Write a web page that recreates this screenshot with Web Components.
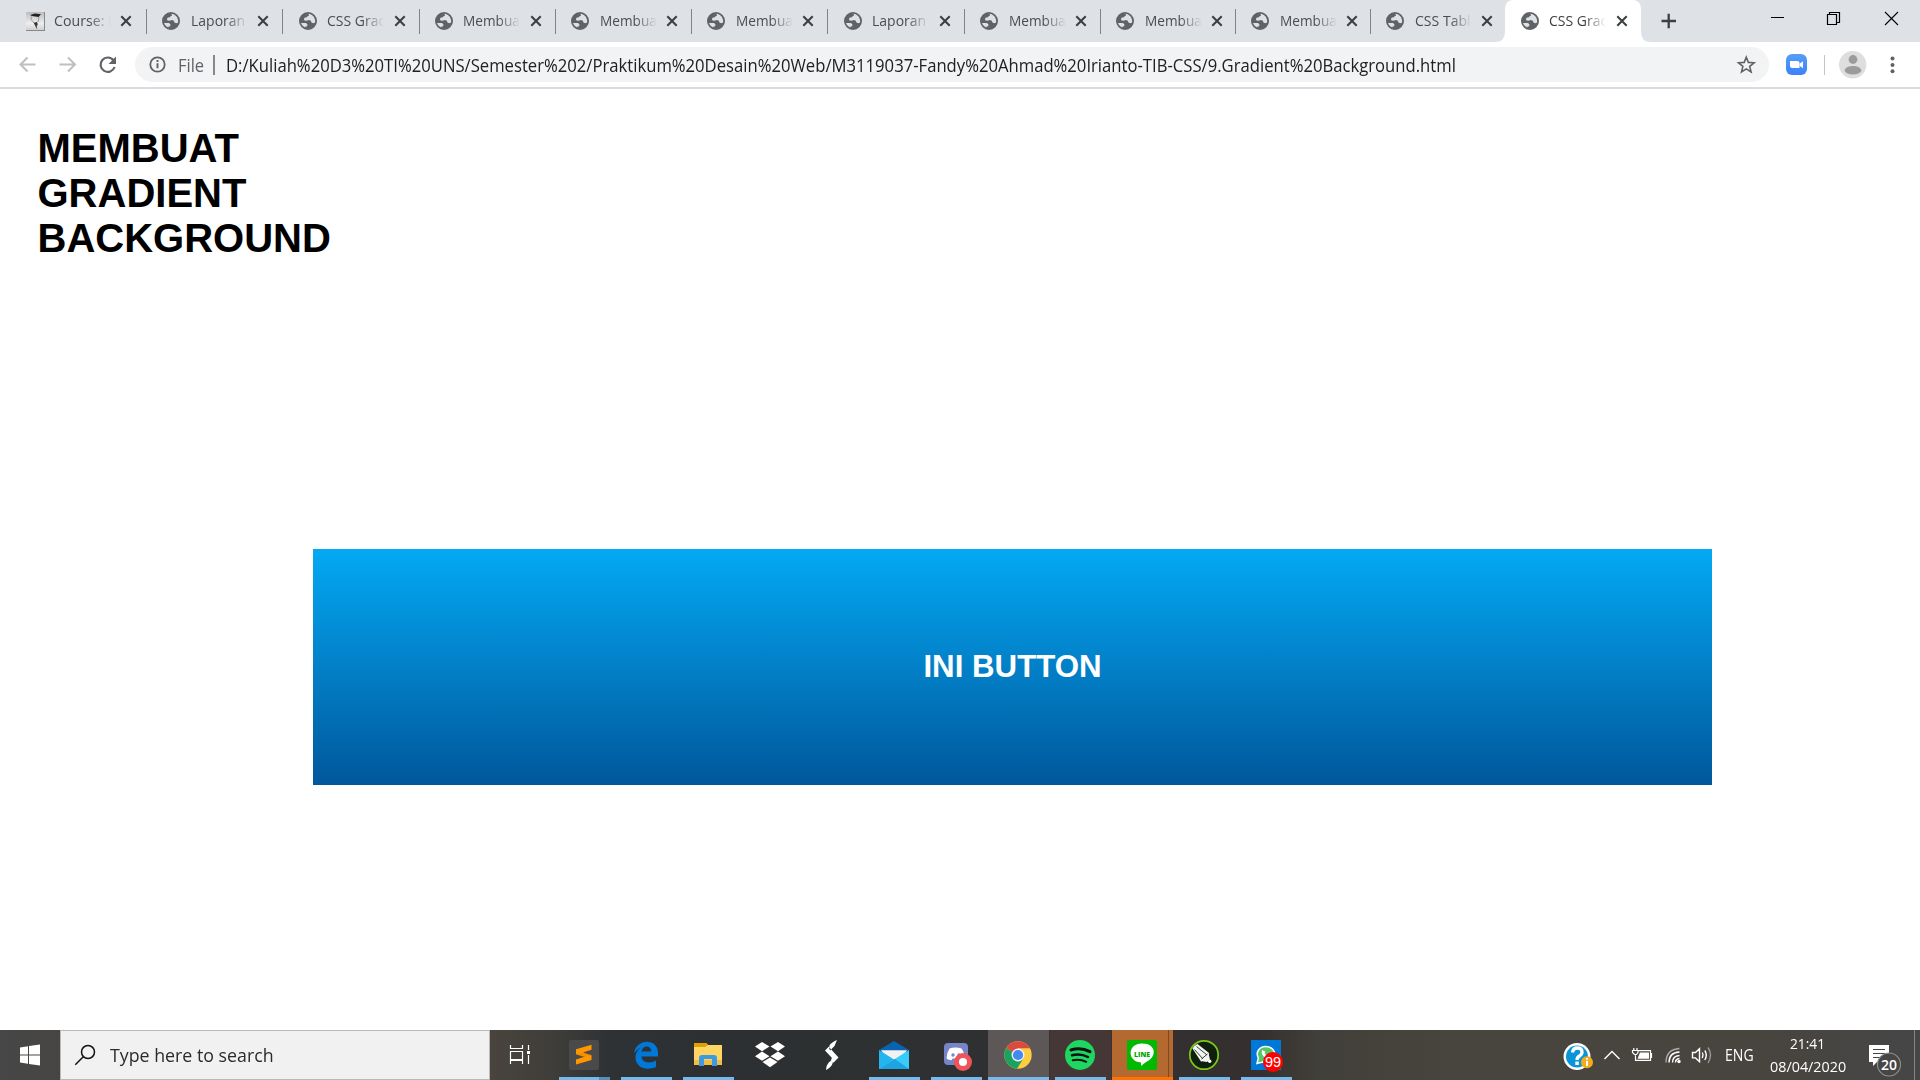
<!DOCTYPE html>
<html lang="en">
<head>
<meta charset="utf-8">
<title>CSS Gradient</title>
<style>
html,body{margin:0;height:100%;background:#fff;overflow:hidden}
body{font-family:"Open Sans","Noto Sans",sans-serif}
</style>
</head>
<body>
<desktop-screen></desktop-screen>
<script>
const define = (name, html, init) => {
  const t = document.createElement('template');
  t.innerHTML = html;
  customElements.define(name, class extends HTMLElement {
    constructor() { super(); this.attachShadow({mode: 'open'}).append(t.content.cloneNode(true)); }
    connectedCallback() { if (init) init(this, this.shadowRoot); }
  });
};

/* Text set to a given width in px by a horizontal scale */
define('fit-text', `<style>
:host{display:block;white-space:pre;flex:none}
span{display:inline-block;transform-origin:0 0}
</style><span><slot></slot></span>`, (el, root) => {
  const w = +el.getAttribute('w'), s = root.querySelector('span');
  el.style.width = w + 'px';
  s.style.transform = `scaleX(${w / s.offsetWidth})`;
});

define('globe-icon', `<style>:host{display:block;width:18px;height:18px;flex:none}svg{display:block}</style>
<svg width="18" height="18" viewBox="0 0 18 18"><circle cx="9" cy="9" r="8.1" fill="#dee1e6" stroke="#5f6368" stroke-width="1.8"/>
<path fill="#5f6368" d="M8.2 1.2C3.8 1.5 1 5 1 9.2c0 .8.1 1.2.4 1.9h5.5l1.5 1.2-.2 2-2 .5.2 1.3c5 2 9.5-1.6 10.3-5.500l-2.500.6-1.700-.6-.9-2-2.500-.5-.9.700-2.700-.2-.6-1.500 1-1.600 2.200-.3.500-1.100 1.400-.4-.1-1.300z"/></svg>`);

define('course-icon', `<style>:host{display:block;width:19px;height:19px;flex:none}svg{display:block}</style>
<svg width="19" height="19" viewBox="0 0 19 19"><defs><linearGradient id="g" x2="0" y2="1"><stop stop-color="#bbb"/><stop offset=".6" stop-color="#eee"/><stop offset="1" stop-color="#ccc"/></linearGradient></defs>
<rect width="19" height="19" rx="1" fill="url(#g)"/><path d="M0 18.500h19M18.500 0v19" stroke="#888"/>
<path d="M4 3l5-1.500 6 .8-2.500 2.700L6 4z" fill="#222"/><path d="M5.500 4.500l-.5 3 3 3.500M13 5l-1 5" fill="none" stroke="#999" stroke-width="1"/><path d="M8.200 11l2.800-.5.200 2.500-1.200 1.500zM10.200 14l.5 2.500" fill="#333" stroke="#333" stroke-width=".8"/></svg>`);

define('browser-tab', `<style>
:host{display:flex;align-items:center;box-sizing:border-box;width:var(--w,136.3px);height:42px;flex:none;padding-left:15.300px;position:relative;font-size:15.300px;color:#4a4d51}
.t{width:57px;margin-left:10.500px;margin-top:-1.500px;overflow:hidden;line-height:22px;height:22px;-webkit-mask:linear-gradient(90deg,#000 62%,transparent 100%);mask:linear-gradient(90deg,#000 62%,transparent 100%)}
.x{margin-left:8.500px;flex:none}
:host([first]) .t{margin-left:9.500px}
:host([first]) .x{margin-left:7.500px}
:host(:not([active]):not([last]))::after{content:"";position:absolute;right:0;top:9px;width:1px;height:25px;background:#808387}
.bg{display:none}
:host([active]) .bg{display:block;position:absolute;left:-10px;top:0;z-index:0}
::slotted(*),.t,.x{position:relative}
:host([active]){color:#3c4043}
</style>
<svg class="bg" width="156" height="42" viewBox="0 0 156 42"><path fill="#fff" d="M0 42q10 0 10-10V9Q10 0 19 0H137q9 0 9 9V32q0 10 10 10z"/></svg>
<slot name="icon"></slot><div class="t"><slot></slot></div>
<svg class="x" width="14" height="14" viewBox="0 0 14 14"><path d="M2.300 2.300l9.400 9.400M11.700 2.300L2.300 11.700" stroke="#3c4043" stroke-width="2.100"/></svg>`);

define('tab-strip', `<style>
:host{display:flex;height:42px;background:#dee1e6}
.row{display:flex;padding-left:10.700px;width:1640.500px;box-sizing:border-box;flex:none}
.plus{margin-left:18px}.sp{flex:1}
svg{display:block;flex:none}
</style><div class="row"></div>
<svg class="plus" width="20" height="42" viewBox="1659 0 20 42"><path d="M1661.500 21h14.500M1668.700 13.700v14.600" stroke="#3c4043" stroke-width="2.300"/></svg>
<div class="sp"></div>
<svg width="170" height="42" viewBox="1750 0 170 42"><g fill="none" stroke="#000"><path d="M1771 17.500h13"/><path d="M1827.500 14.500h9v10h-9zM1829.500 14.500v-2h10v10h-3" stroke-width="1.200"/><path d="M1885 12l13 13M1898 12l-13 13" stroke-width="1.100"/></g></svg>`, (el, root) => {
  const tabs = [['Course: D',64],['Laporan',54],['CSS Grad',60.500],['Membuat',61.500],['Membuat',61.500],['Membuat',61.500],['Laporan',54],['Membuat',61.500],['Membuat',61.500],['Membuat',61.500],['CSS Tabl',56],['CSS Grad',60.500]];
  const widths = [136.300,136.300,136.300,136.300,136.300,136.300,136.300,136,135,135,134.500,136];
  root.querySelector('.row').innerHTML = tabs.map(([t, w], i) =>
    `<browser-tab style="--w:${widths[i]}px" ${i === 11 ? 'active' : i === 10 ? 'last' : i ? '' : 'first'}>${i ? '<globe-icon slot="icon"></globe-icon>' : '<course-icon slot="icon"></course-icon>'}<fit-text w="${w}">${t}</fit-text></browser-tab>`).join('');
});

define('address-bar', `<style>
:host{display:flex;align-items:center;height:47px;box-sizing:border-box;border-bottom:2px solid #d9dbe0;background:#fff;font-size:17.800px;color:#202124;line-height:24px}
svg{display:block;flex:none}
.box{display:flex;align-items:center;width:1634px;height:35px;border-radius:18px;background:#f1f3f4;flex:none}
.file{color:#5f6368}
.bar{width:1.500px;height:20px;background:#85888c;margin:0 11px 0 9px}
.sp{flex:1}
</style>
<svg width="135" height="45" viewBox="0 42 135 45"><g fill="none" stroke="#bdbfc1" stroke-width="2"><path d="M35.500 64.500H20.500M27.500 57.500l-7 7 7 7"/><path d="M59.500 64.500H75M68 57.500l7 7-7 7"/></g>
<path d="M113.500 60.300A7.200 7.200 0 1 0 114.600 67" fill="none" stroke="#5f6368" stroke-width="2.200"/><path d="M116 56.500v7.500h-7.500z" fill="#5f6368"/></svg>
<div class="box">
<svg width="43" height="35" viewBox="135 47 43 35"><circle cx="157.500" cy="64.500" r="7.200" fill="none" stroke="#5f6368" stroke-width="1.800"/><path d="M157.500 63.300v5M157.500 60v2" stroke="#5f6368" stroke-width="1.900"/></svg>
<fit-text class="file" w="26">File</fit-text><div class="bar"></div>
<fit-text w="1230">D:/Kuliah%20D3%20TI%20UNS/Semester%202/Praktikum%20Desain%20Web/M3119037-Fandy%20Ahmad%20Irianto-TIB-CSS/9.Gradient%20Background.html</fit-text>
<div class="sp"></div>
<svg width="35" height="35" viewBox="1734 47 35 35"><path d="M1746.300 57.200l2.100 5.200 5.700.4-4.400 3.600 1.400 5.500-4.800-3-4.800 3 1.400-5.500-4.400-3.600 5.700-.4z" fill="none" stroke="#5f6368" stroke-width="1.600"/></svg>
</div>
<svg width="151" height="45" viewBox="1769 42 151 45"><defs><linearGradient id="z" x2="0" y2="1"><stop stop-color="#569df8"/><stop offset="1" stop-color="#3b82fa"/></linearGradient></defs>
<rect x="1786" y="54" width="21" height="21" rx="6" fill="url(#z)"/><path d="M1790 61h7.500q2 0 2 2v5h-7.500q-2 0-2-2zM1799.800 63.500l3.200-2.300v7l-3.200-2.300z" fill="#fff"/>
<path d="M1824.500 55v20" stroke="#c4c6ca"/>
<circle cx="1852.700" cy="64.700" r="13.700" fill="#dedede"/><circle cx="1853" cy="59.500" r="4.400" fill="#9b9b9b"/><ellipse cx="1853" cy="70.200" rx="8.300" ry="4.300" fill="#9b9b9b"/>
<g fill="#5f6368"><circle cx="1892.500" cy="58.500" r="2"/><circle cx="1892.500" cy="65" r="2"/><circle cx="1892.500" cy="71.300" r="2"/></g></svg>`);

define('gradient-button', `<style>
:host{display:flex;align-items:center;justify-content:center;width:1399px;height:236px;background:linear-gradient(#03a9f4,#01579b);color:#fff;font:bold 31.250px "Liberation Sans",Arial,sans-serif}
</style><slot></slot>`);

define('web-page', `<style>
:host{display:block;flex:1;background:#fff;padding-top:37px;box-sizing:border-box}
h1{margin:0 0 0 37.500px;width:300px;font:bold 40px/45px "Liberation Sans",Arial,sans-serif;color:#000}
gradient-button{margin:288px 0 0 313px}
</style><h1>MEMBUAT GRADIENT BACKGROUND</h1><gradient-button>INI BUTTON</gradient-button>`);

define('task-app', `<style>
:host{display:flex;width:61px;height:50px;margin-right:1px;flex:none;position:relative;justify-content:center;background:var(--bg,transparent)}
:host([run])::after{content:"";position:absolute;bottom:0;left:5px;right:5px;height:3px;background:var(--line,#76b9ed)}
:host([wide])::after{left:0;right:0}
::slotted(svg){display:block;width:61px;height:50px}
</style><slot></slot>`);

define('search-box', `<style>
:host{display:flex;align-items:center;width:430px;height:50px;box-sizing:border-box;border:1px solid #b9b9b9;background:#f1f1f1;color:#2b2b2b;font-size:18px;line-height:24px}
svg{display:block;flex:none}
</style><svg width="49" height="48" viewBox="61 1031 49 48"><g fill="none" stroke="#111" stroke-width="1.500"><circle cx="88" cy="1052" r="6.500"/><path d="M83.300 1056.700l-8 8"/></g></svg><fit-text w="164">Type here to search</fit-text>`);

define('system-tray', `<style>
:host{display:flex;align-items:center;color:#fff;font-size:15.500px;width:360px;flex:none;height:50px}
svg{display:block;flex:none}
.clock{display:flex;flex-direction:column;align-items:center;width:76px;margin-left:16px;line-height:23px;margin-top:-1px;font-size:15.300px}
.clock fit-text:first-child{margin-left:-2px}
</style>
<svg width="165" height="50" viewBox="1560 1030 165 50">
<circle cx="1577" cy="1056.500" r="13.500" fill="#fff"/><circle cx="1577" cy="1056.500" r="11" fill="#0995d8"/>
<path d="M1572.500 1052.500q.5-4.500 5-4.500t4.500 4q0 2.500-2.500 4t-2.500 4" fill="none" stroke="#fff" stroke-width="3.300"/><rect x="1575.300" y="1061.500" width="3.500" height="3.500" fill="#fff"/>
<circle cx="1587" cy="1062.300" r="6" fill="#f3ac1c"/><path d="M1587 1061v5M1587 1058v1.800" stroke="#fff" stroke-width="2"/>
<g fill="none" stroke="#fff" stroke-width="1.400"><path d="M1604.500 1059l7.500-7.500 7.500 7.500"/>
<path d="M1638 1050.700h12.500v9.600h-15v-5M1651.500 1053v5M1633.800 1048v3M1637 1048v3M1632.500 1050.500h5.500v2l-1.500 2h-2l-2-2z" stroke-width="1.200"/>
<path d="M1666 1062.500q0-13 13.500-14" stroke="#aaa"/><path d="M1669 1062.500q0-10 10.500-10.500M1672.500 1062.500q0-6.500 7-7M1675.500 1062.500q0-3.500 4-4"/>
<path d="M1692.500 1052.500h3l4-3.800v13l-4-3.800h-3zM1702.300 1052.500q1.500 2.500 0 5.500M1704.800 1050.500q3 4.500 0 9.500"/><path d="M1708 1047.500q5 7.500 0 15.500" stroke="#999"/></g>
<path d="M1640 1052.500h9v6.300h-11.500z" fill="#fff"/><circle cx="1679" cy="1061.500" r="1.700" fill="#fff"/></svg>
<fit-text w="29">ENG</fit-text>
<div class="clock"><fit-text w="35">21:41</fit-text><fit-text w="76">08/04/2020</fit-text></div>
<svg width="74" height="50" viewBox="1846 1030 74 50"><path d="M1869 1045h20v17h-12l-4 4v-4h-4z" fill="#fff"/><path d="M1873 1049.500h12M1873 1053.500h12M1873 1057.500h7" stroke="#444" stroke-width="1.200"/>
<circle cx="1889" cy="1064.500" r="11.500" fill="#474645" stroke="#929292" stroke-width="1.100"/><text x="1889" y="1070" font-family="Open Sans" font-weight="600" font-size="15" text-anchor="middle" textLength="16" lengthAdjust="spacingAndGlyphs" fill="#fff">20</text><path d="M1914.500 1030v50" stroke="#858585"/></svg>`);

const icon = (x, body) => `<svg viewBox="${x} 1030 61 50">${body}</svg>`;
define('task-bar', `<style>
:host{display:flex;height:50px;background:linear-gradient(90deg,#474747 0,#464543 60px,#49443d 490px,#403e3a 550px,#2e3234 610px,#2d3032 720px,#2e3031 980px,#3a3433 1100px,#342f30 1180px,#35302f 1260px,#42403a 1320px,#48443e 1450px,#48443e 1760px,#464646 1900px)}
.start{width:60px;height:50px;display:block;flex:none}
.tv{display:block;width:64px;height:50px;flex:none}
.sp{flex:1}
</style>
<svg class="start" viewBox="0 1030 60 50"><path fill="#fff" d="M20 1047.500l8-1.200v8.200h-8zM29 1046.100l11-1.600v10h-11zM20 1055.500h8v8.200l-8-1.200zM29 1055.500h11v10l-11-1.600z"/></svg>
<search-box></search-box>
<svg class="tv" viewBox="490 1030 64 50"><g fill="none" stroke="#fff" stroke-width="1.200"><path d="M510.500 1045v3.500h12v-3.500M510.500 1051.500h12v8h-12zM510.500 1064v-3.500h12v3.500M528.500 1045v5M528.500 1055v9"/></g><path d="M527 1051h3v3h-3z" fill="#fff"/></svg>
<task-app run style="--line:linear-gradient(90deg,#76b9ed 40px,#5b8db8 40px)">${icon(554,`<rect x="569" y="1040" width="30" height="30" rx="2" fill="#4a4a4a"/><path fill="#ff9800" d="M576 1049.300l15.500-4.500v5l-8.500 2.700 8.500 2.700v4.800l-15.500 4.500v-5l8.500-2.700-8.500-2.500z"/><path fill="#e08200" d="M576 1054.300l7-1.800 8.500 2.700-8 2.200z" opacity=".4"/>`)}</task-app>
<task-app run>${icon(616,`<path fill="#0078d7" d="M634 1053.500c2-15.500 24-15.500 24-.5v3.500h-16.500c.5 7 9.500 7 14.500 4v6.500c-9 4-20.500 1-20.500-9.500 0-5 2.500-8 6-10-3.500 1-6 3.500-7.500 6zm7.500-2h9.700c0-7-9-6.500-9.700 0z"/>`)}</task-app>
<task-app run>${icon(678,`<path d="M694 1043h12l2 2h14v20h-28z" fill="#ffd664"/><path d="M694 1043h12l2 2-3 2h-11z" fill="#dfa000"/><path d="M694 1060h28v5h-28z" fill="#f3bd3f"/><path d="M699 1066v-8q0-3 3-3h12q3 0 3 3v8h-5v-7h-8v7z" fill="#3c9ae3"/>`)}</task-app>
<task-app>${icon(740,`<path fill="#fff" d="M755 1046.500l7-4.500 7.500 4.500-7.500 4.800zM770.500 1046.500l7.500-4.500 7 4.500-7 4.800zM755 1056.300l7-4.700 7.500 4.700-7.500 4.500zM770.500 1056.300l7.500-4.700 7 4.700-7 4.500zM762.500 1062l7.500-4.600 7.500 4.600-7.500 5.300z"/>`)}</task-app>
<task-app>${icon(802,`<path fill="#fff" d="M837 1040q-6 2.500-7.500 5.500-1 2.500.5 5l3.500-3.500q1.500-1.200 1.800-3zM825 1050.500l3.700-3.700 9.800 10.700-5 5.200-2.500-3.200 1-1.500zM833.300 1058.500l-.6 4.500q-1 4-6.700 7 .3-5 2.500-7.300z"/>`)}</task-app>
<task-app run>${icon(864,`<path d="M879 1050l15-9 15 9v3h-30z" fill="#0864b0"/><path d="M881 1050.200h26l-7 11h-11z" fill="#f2f2f2"/><path d="M879 1050l30 19h-30z" fill="#24b5ef"/><path d="M909 1050l-30 19h30z" fill="#3bcbfa"/><path d="M879 1069l16-10 14 10z" fill="#1da5e3"/>`)}</task-app>
<task-app run>${icon(926,`<path d="M948 1043h16q4 0 4 4v22l-4-4h-16q-4 0-4-4v-14q0-4 4-4z" fill="#7684c8"/><path d="M949.500 1048.500q6-2 12 0 3 4 3 10-2.500 2-5 1.700l-1-1.700h-6l-1 1.700q-3 0-5-1.700.3-6 3-10z" fill="#fff"/><circle cx="953" cy="1055" r="1.700" fill="#7684c8"/><circle cx="959" cy="1055" r="1.700" fill="#7684c8"/><circle cx="963" cy="1062" r="9" fill="#ee5459"/><circle cx="963" cy="1062" r="4" fill="#fff"/>`)}</task-app>
<task-app run wide style="--bg:#5d5857">${icon(988,`<circle cx="1018" cy="1055" r="13.700" fill="#fdcd3f"/><path d="M1018 1055L1006.100 1048.200A13.700 13.700 0 0 1 1029.900 1048.200z" fill="#db4a3e"/><path d="M1018 1048.300h11.900l-5.700 6.700h-6z" fill="#fdcd3f"/><path d="M1006.100 1048.200A13.700 13.700 0 0 0 1017 1068.700L1023.400 1058.500 1018 1055z" fill="#1aa260"/><circle cx="1018" cy="1055" r="6.500" fill="#f1f1f1"/><circle cx="1018" cy="1055" r="5.100" fill="#4587f3"/>`)}</task-app>
<task-app run style="--bg:#443735">${icon(1050,`<circle cx="1080" cy="1055" r="15" fill="#1ed760"/><g fill="none" stroke="#111" stroke-linecap="round"><path d="M1071 1050q10-3 19 1.700" stroke-width="3"/><path d="M1072 1055.300q8.500-2.300 16 1.700" stroke-width="2.500"/><path d="M1072.700 1060.300q7-1.800 13.500 1.500" stroke-width="2"/></g>`)}</task-app>
<task-app run wide style="--bg:#b46930;--line:#ff7200">${icon(1112,`<path d="M1168.500 1030v47" stroke="#7d4925"/><rect x="1127" y="1040" width="30" height="30" rx="2" fill="#00b900"/><path d="M1142 1043.500c15 0 15 14 4 18.500l-5 4v-3.500c-14-1-14-19 1-19z" fill="#fff"/><text x="1142" y="1056.500" font-family="Open Sans" font-size="7.500" font-weight="800" fill="#00a800" text-anchor="middle" textLength="16" lengthAdjust="spacingAndGlyphs">LINE</text>`)}</task-app>
<task-app run>${icon(1174,`<circle cx="1204" cy="1055" r="14.200" fill="#10200c" stroke="#7dca13" stroke-width="1.700"/><path d="M1192.500 1048.500q1.500-3.500 5-4.500l11.500 9-1 6-7 2.500z" fill="#f4f4f4"/><path d="M1196.500 1046.500l10.500 8.500M1194.500 1049.500l8.500 9.500" stroke="#31452c" stroke-width="1"/><path d="M1207 1044.500v4" stroke="none"/><path d="M1200.500 1061l8-7.500 1.500 6-3 2.500z" fill="#f4f4f4"/><path d="M1201.500 1059l6-5" stroke="#31452c"/><circle cx="1209.700" cy="1061.300" r="1.700" fill="#fff"/>`)}</task-app>
<task-app run>${icon(1236,`<rect x="1251" y="1040" width="30" height="30" fill="#0078d7"/><path d="M1257 1063.500l1.300-5.500c-3-6 1-11.500 7.500-11.500s9.500 5 9 9.500-5 8-12 6z" fill="#55c766" stroke="#fff" stroke-width="1.500"/><path d="M1262 1050q-2 7 8 9l2-2-3-2-1.500 1.200-3-3 1-1.500z" fill="#fff"/><circle cx="1273" cy="1062" r="10" fill="#f00"/><text x="1273" y="1067" font-family="Liberation Sans" font-size="14.500" fill="#fff" text-anchor="middle">99</text>`)}</task-app>
<div class="sp"></div><system-tray></system-tray>`);

define('desktop-screen', `<style>
:host{display:flex;flex-direction:column;width:1920px;height:1080px;overflow:hidden}
tab-strip,address-bar,task-bar{flex:none}
</style><tab-strip></tab-strip><address-bar></address-bar><web-page></web-page><task-bar></task-bar>`);
</script>
</body>
</html>
